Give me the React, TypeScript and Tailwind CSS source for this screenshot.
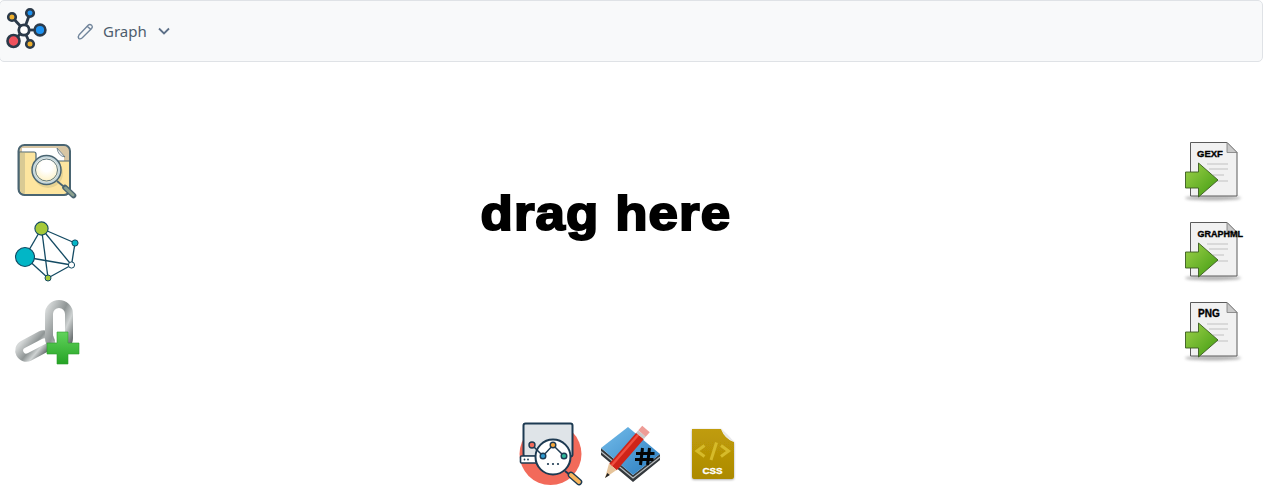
import { Fragment } from 'react'

function Logo() {
  const nodes = [
    { x: 12, y: 17, r: 3.8, fill: '#eeb02f' },
    { x: 30, y: 13, r: 3.8, fill: '#1e93f2' },
    { x: 40, y: 30, r: 5.4, fill: '#1e93f2' },
    { x: 13.5, y: 41, r: 6, fill: '#f0525d' },
    { x: 30, y: 44, r: 3.8, fill: '#eeb02f' },
  ]
  return (
    <svg width="48" height="54" viewBox="0 4 48 54" className="shrink-0">
      {nodes.map((n) => (
        <line key={n.x} x1="24" y1="30" x2={n.x} y2={n.y} stroke="#2b3a4a" strokeWidth="2.8" />
      ))}
      {nodes.map((n) => (
        <circle key={n.x} cx={n.x} cy={n.y} r={n.r} fill={n.fill} stroke="#2b3a4a" strokeWidth="2.6" />
      ))}
      <circle cx="24" cy="30" r="5.2" fill="#fff" stroke="#2b3a4a" strokeWidth="2.8" />
    </svg>
  )
}

function FolderIcon() {
  return (
    <svg width="85" height="75" viewBox="0 0 85 75" className="block">
      <defs>
        <radialGradient id="lens" cx="0.5" cy="0.35" r="0.7">
          <stop offset="0.3" stopColor="#ffffff" />
          <stop offset="1" stopColor="#fdeeb4" />
        </radialGradient>
      </defs>
      <rect x="13.5" y="10" width="51.5" height="50" rx="6" fill="#d8c6a4" />
      <path d="M17 13 H52 L59 21 V28 H17 Z" fill="#fff" />
      <path d="M52 13 Q53 21 60 22 Z" fill="#ececec" stroke="#5a7280" strokeWidth="0.8" />
      <path d="M14 17 H29 Q31 17 31 19 V24 Q31 26 33 26 H65 V54 Q65 60 59 60 H20 Q14 60 14 54 Z" fill="#fde59f" stroke="#4a6572" strokeWidth="1.2" />
      <path d="M15 18 H20 V59 Q15 58 15 54 Z" fill="#d9ca94" />
      <rect x="13.5" y="10" width="51.5" height="50" rx="6" fill="none" stroke="#4a6572" strokeWidth="2" />
      <circle cx="43" cy="38" r="15" fill="#8a8a60" opacity="0.2" />
      <circle cx="41.5" cy="35" r="13" fill="url(#lens)" stroke="#c6d8de" strokeWidth="2.5" />
      <circle cx="41.5" cy="35" r="14.5" fill="none" stroke="#4a6572" strokeWidth="1.5" />
      <circle cx="41.5" cy="35" r="11" fill="none" stroke="#4a6572" strokeWidth="0.9" />
      <line x1="52" y1="46" x2="58" y2="51" stroke="#4a6572" strokeWidth="1.8" />
      <line x1="60" y1="52.5" x2="68.5" y2="60.5" stroke="#4a6572" strokeWidth="5.6" strokeLinecap="round" />
      <line x1="60.5" y1="53" x2="68" y2="60" stroke="#8ba08f" strokeWidth="3" strokeLinecap="round" />
    </svg>
  )
}

function NetworkIcon() {
  const big = [20, 42]
  const top = [36.5, 13.5]
  const dot = [70, 28]
  const white = [66.5, 50]
  const low = [43, 63]
  const edges = [
    [top, big],
    [top, dot],
    [top, white],
    [top, low],
    [big, white],
    [big, low],
    [low, white],
    [white, dot],
  ]
  return (
    <svg width="85" height="75" viewBox="0 0 85 75" className="block">
      {edges.map((e, i) => (
        <line key={i} x1={e[0][0]} y1={e[0][1]} x2={e[1][0]} y2={e[1][1]} stroke="#134a63" strokeWidth="1.3" />
      ))}
      <circle cx="36.5" cy="13.5" r="6.6" fill="#a5c93a" stroke="#134a63" strokeWidth="1.1" />
      <circle cx="20" cy="42" r="9.5" fill="#02b6c6" stroke="#134a63" strokeWidth="1.1" />
      <circle cx="70" cy="28" r="3.1" fill="#02b6c6" stroke="#134a63" strokeWidth="1" />
      <circle cx="66.5" cy="50" r="3.1" fill="#fff" stroke="#134a63" strokeWidth="1" />
      <circle cx="43" cy="63" r="3" fill="#a5c93a" stroke="#134a63" strokeWidth="1" />
    </svg>
  )
}

function LinkIcon() {
  return (
    <svg width="85" height="75" viewBox="0 0 85 75" className="block">
      <defs>
        <linearGradient id="metal" x1="0" y1="0" x2="1" y2="1">
          <stop offset="0" stopColor="#d5d8d8" />
          <stop offset="0.45" stopColor="#8f9595" />
          <stop offset="0.7" stopColor="#cfd3d3" />
          <stop offset="1" stopColor="#63696a" />
        </linearGradient>
        <linearGradient id="plus" x1="0" y1="0" x2="0" y2="1">
          <stop offset="0" stopColor="#62d35c" />
          <stop offset="1" stopColor="#25a325" />
        </linearGradient>
      </defs>
      <rect x="-17" y="-7" width="34" height="14" rx="7" transform="translate(30 51) rotate(-28)" fill="none" stroke="url(#metal)" strokeWidth="8" />
      <rect x="44" y="9" width="20" height="44" rx="10" fill="none" stroke="url(#metal)" strokeWidth="8" />
      <path d="M52 37 H63 V48 H74 V59 H63 V69 H52 V59 H42 V48 H52 Z" fill="url(#plus)" stroke="#2b9b2b" strokeWidth="0.6" />
    </svg>
  )
}

function ExportIcon({ label, size, x }: { label: string; size: number; x: number }) {
  const id = `arrow-${label}`
  return (
    <svg width="80" height="75" viewBox="0 0 80 75" className="block">
      <defs>
        <linearGradient id={id} x1="0" y1="0" x2="1" y2="1">
          <stop offset="0" stopColor="#9ed24a" />
          <stop offset="1" stopColor="#3f9a10" />
        </linearGradient>
        <filter id={`${id}-blur`} x="-20%" y="-100%" width="140%" height="300%">
          <feGaussianBlur stdDeviation="1.6" />
        </filter>
      </defs>
      <ellipse cx="38" cy="63" rx="28" ry="2.5" fill="#777" opacity="0.55" filter={`url(#${id}-blur)`} />
      <path d="M15.5 7.5 H52 L62 17.5 V61 H15.5 Z" fill="#f1f1f1" stroke="#5a5a5a" strokeWidth="1" />
      <path d="M52 7.5 V17.5 H62 Z" fill="#c9c9c9" stroke="#7a7a7a" strokeWidth="0.8" />
      <g stroke="#d6d6d6" strokeWidth="1.8">
        <line x1="32" y1="29" x2="53" y2="29" />
        <line x1="34" y1="34" x2="53" y2="34" />
        <line x1="38" y1="40" x2="49" y2="40" />
        <line x1="42" y1="46" x2="53" y2="46" />
      </g>
      <text x={x} y="21.5" fontFamily="'Liberation Sans', sans-serif" fontWeight="700" fontSize={size} fill="#000" stroke="#000" strokeWidth="0.35">
        {label}
      </text>
      <path d="M10.5 37 H23.5 V28 L43 45 L23.5 62 V53 H10.5 Z" fill={`url(#${id})`} stroke="#3a5a20" strokeWidth="0.9" />
    </svg>
  )
}

function AnalyticsIcon() {
  return (
    <svg width="80" height="75" viewBox="0 0 80 75" className="block">
      <circle cx="40.5" cy="39" r="31" fill="#f26a5a" />
      <rect x="13.5" y="8.5" width="49" height="33" rx="2" fill="#dfe4e8" stroke="#1d3a52" strokeWidth="2" />
      <rect x="10.5" y="41" width="19" height="7" rx="1" fill="#fff" stroke="#1d3a52" strokeWidth="1.6" />
      <circle cx="14.5" cy="44.5" r="0.9" fill="#1d3a52" />
      <circle cx="18" cy="44.5" r="0.9" fill="#1d3a52" />
      <line x1="55" y1="56" x2="60" y2="60" stroke="#1d3a52" strokeWidth="2" />
      <line x1="61" y1="60" x2="69" y2="67" stroke="#1d3a52" strokeWidth="6.5" strokeLinecap="round" />
      <line x1="61" y1="60" x2="69" y2="67" stroke="#f8b65c" strokeWidth="3.8" strokeLinecap="round" />
      <circle cx="43" cy="42" r="17.5" fill="#fff" stroke="#1d3a52" strokeWidth="2" />
      <polyline points="22,30 33,41 43,30 54,41" fill="none" stroke="#1d3a52" strokeWidth="1.5" />
      <circle cx="22" cy="30" r="3" fill="#f26a5a" stroke="#1d3a52" strokeWidth="1.4" />
      <circle cx="33" cy="41" r="2.8" fill="#2e9ad0" stroke="#1d3a52" strokeWidth="1.4" />
      <circle cx="43" cy="30" r="2.8" fill="#f8a83c" stroke="#1d3a52" strokeWidth="1.4" />
      <circle cx="54" cy="41" r="2.8" fill="#2fb89a" stroke="#1d3a52" strokeWidth="1.4" />
      <circle cx="38" cy="49" r="1.1" fill="#1d3a52" />
      <circle cx="43" cy="49" r="1.1" fill="#1d3a52" />
      <circle cx="48" cy="49" r="1.1" fill="#1d3a52" />
    </svg>
  )
}

function BookIcon() {
  return (
    <svg width="80" height="75" viewBox="0 0 80 75" className="block">
      <defs>
        <linearGradient id="cover" x1="0" y1="0" x2="1" y2="1">
          <stop offset="0" stopColor="#74bdea" />
          <stop offset="1" stopColor="#2a7cc0" />
        </linearGradient>
      </defs>
      <path d="M6 33 L38 60 L65 39 L65 45 L38 67 L6 40 Z" fill="#33383c" />
      <path d="M6 36.5 L38 63 L65 42" fill="none" stroke="#b9bdbf" strokeWidth="1.2" />
      <path d="M33 12 L65 39 L38 60 L6 33 Z" fill="url(#cover)" />
      <g stroke="#050505" strokeWidth="3">
        <line x1="47.5" y1="33" x2="45.5" y2="50" />
        <line x1="54.5" y1="33" x2="52.5" y2="50" />
        <line x1="41" y1="38.5" x2="59.5" y2="38.5" />
        <line x1="40" y1="44.5" x2="58.5" y2="44.5" />
      </g>
      <line x1="45" y1="21" x2="18" y2="52" stroke="#cf2418" strokeWidth="10" />
      <line x1="43.5" y1="19.5" x2="16.5" y2="50.5" stroke="#ef4f40" strokeWidth="2.4" />
      <path d="M14 48.5 L21.5 55 L10 63 Z" fill="#e6c49a" />
      <path d="M12.3 58 L14.8 60 L10 63 Z" fill="#222" />
      <line x1="45" y1="21" x2="47" y2="18.5" stroke="#c8c8c8" strokeWidth="10" />
      <line x1="47" y1="18.5" x2="51" y2="14" stroke="#ee9c96" strokeWidth="10" />
    </svg>
  )
}

function CssIcon() {
  return (
    <svg width="75" height="75" viewBox="0 0 75 75" className="block">
      <defs>
        <filter id="cssShadow" x="-20%" y="-20%" width="140%" height="140%">
          <feDropShadow dx="0" dy="0.8" stdDeviation="0.8" floodColor="#000" floodOpacity="0.35" />
        </filter>
        <linearGradient id="cssFill" x1="0" y1="0" x2="0" y2="1">
          <stop offset="0" stopColor="#c09c08" />
          <stop offset="1" stopColor="#ac8a04" />
        </linearGradient>
      </defs>
      <path d="M17 14 H46 Q50 24 59 27 V62 Q59 64 57 64 H19 Q17 64 17 62 Z" fill="url(#cssFill)" filter="url(#cssShadow)" />
      <path d="M46 14 Q50 24 59 27 Q52 18 46 14 Z" fill="#e8e8e8" />
      <g fill="none" stroke="#d6bb2a" strokeWidth="3">
        <polyline points="29.5,30.5 22,36 29.5,41.5" />
        <line x1="41.5" y1="27.5" x2="36" y2="45" />
        <polyline points="46,30.5 53.5,36 46,41.5" />
      </g>
      <text x="37.5" y="59" textAnchor="middle" fontFamily="'Liberation Sans', sans-serif" fontWeight="700" fontSize="9.8" fill="#fff" stroke="#fff" strokeWidth="0.3">
        CSS
      </text>
    </svg>
  )
}

export default function App() {
  return (
    <Fragment>
      <nav className="h-[62px] flex items-center bg-[#f8f9fa] border border-[#dfe2e6] rounded-[5px] -ml-px">
        <Logo />
        <div className="flex items-center ml-[28px] text-[#4d5d6d] text-[15px] font-['Noto_Sans',sans-serif]">
          <svg width="19" height="19" viewBox="0 0 18 18" fill="none" stroke="#71859b" strokeWidth="1.3">
            <path d="M3 12 L11.5 3 Q13 1.6 14.8 3 Q16.2 4.6 14.8 6.2 L6 15 Q4 16.6 2.6 15.6 Q1.6 14 3 12 Z" />
            <line x1="10.5" y1="4" x2="14" y2="7" />
          </svg>
          <span className="ml-[8px]">Graph</span>
          <svg width="12" height="8" viewBox="0 0 12 8" fill="none" stroke="#5d7088" strokeWidth="1.8" className="ml-[11px]">
            <polyline points="1,1.5 6,6.5 11,1.5" />
          </svg>
        </div>
      </nav>
      <main>
        <div className="flex pt-[73px]">
          <div className="flex flex-col gap-[5px] pl-[5px]">
            <FolderIcon />
            <NetworkIcon />
            <LinkIcon />
          </div>
          <div className="flex-1 flex justify-center pr-[54px] pt-[51px]">
            <h1 className="h-fit text-[48px] leading-[55px] font-bold tracking-[1px] scale-x-[1.1] text-black [-webkit-text-stroke:2px_black] font-['Liberation_Sans',sans-serif]">
              drag here
            </h1>
          </div>
          <div className="flex flex-col gap-[5px] pr-[8px]">
            <ExportIcon label="GEXF" size={9.5} x={22} />
            <ExportIcon label="GRAPHML" size={9} x={22.5} />
            <ExportIcon label="PNG" size={10} x={23} />
          </div>
        </div>
        <div className="flex justify-center pr-[3px] mt-[45px]">
          <AnalyticsIcon />
          <div className="ml-[5px]">
            <BookIcon />
          </div>
          <CssIcon />
        </div>
      </main>
    </Fragment>
  )
}
